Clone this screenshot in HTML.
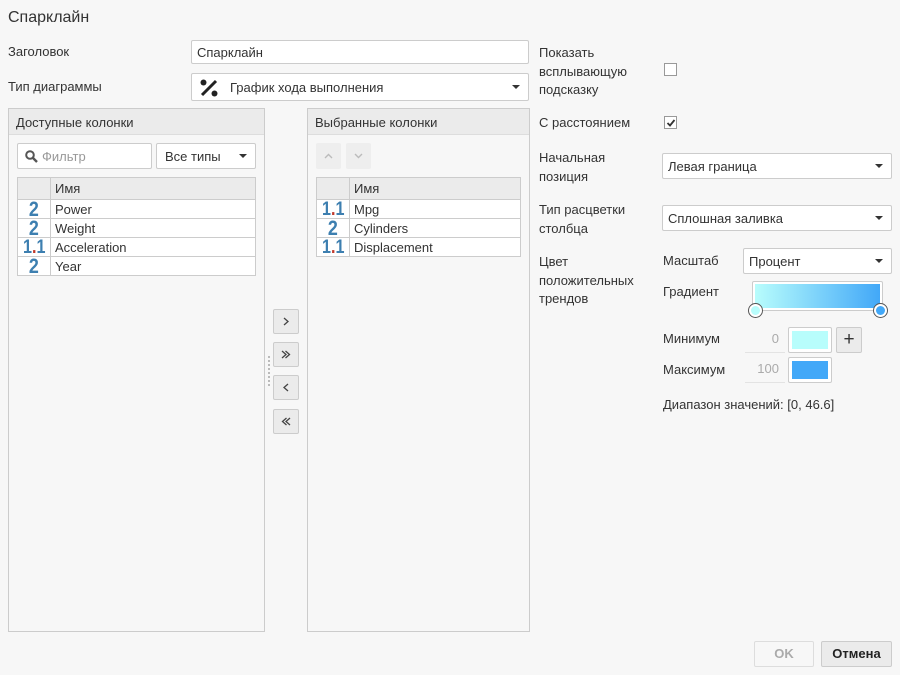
<!DOCTYPE html>
<html><head><meta charset="utf-8"><style>
*{box-sizing:border-box;margin:0;padding:0}
body{width:900px;height:675px;background:#f7f7f7;font-family:"Liberation Sans","DejaVu Sans",sans-serif;font-size:13px;color:#333;position:relative;overflow:hidden}
.a{position:absolute}
.box{position:absolute;background:#fff;border:1px solid #ccc;border-radius:2px}
.sel::after{content:"";position:absolute;right:8px;top:50%;margin-top:-2px;border-left:4px solid transparent;border-right:4px solid transparent;border-top:4px solid #333}
.t{position:absolute;white-space:nowrap}
.panel{position:absolute;border:1px solid #ccc;background:#f7f7f7}
.ph{height:26px;background:#ebebeb;border-bottom:1px solid #ddd;padding:6px 7px;font-size:13px}
table{border-collapse:collapse;position:absolute;background:#fff}
td{border:1px solid #ccc;height:19px;padding:0 4px;font-size:13px}
tr.h td{background:#ebebeb;height:22px}
td.i{width:33px;text-align:center;color:#3d7fb0;font-weight:bold;font-size:21px;line-height:17px;padding:0}
td.i span.n{display:inline-block;transform:scaleX(0.85)}
.btn{position:absolute;background:#ebebeb;border:1px solid #ccc;border-radius:2px;text-align:center;font-size:13px;color:#555}
.cb{position:absolute;width:13px;height:13px;border:1px solid #999;background:#fff}
.r{color:#c0392b}
</style></head><body>
<div class="t" style="left:8px;top:9px;font-size:16px">Спарклайн</div>
<div class="t" style="left:8px;top:44px">Заголовок</div>
<div class="box" style="left:191px;top:40px;width:338px;height:24px"><span class="t" style="left:5px;top:4px">Спарклайн</span></div>
<div class="t" style="left:8px;top:79px">Тип диаграммы</div>
<div class="box sel" style="left:191px;top:73px;width:338px;height:28px">
<svg class="a" style="left:7px;top:4px" width="20" height="20" viewBox="0 0 20 20"><line x1="3" y1="17" x2="17" y2="3" stroke="#222" stroke-width="3"/><circle cx="4.5" cy="4.5" r="3" fill="#222"/><circle cx="15.5" cy="15.5" r="3" fill="#222"/></svg>
<span class="t" style="left:38px;top:6px">График хода выполнения</span></div>

<div class="panel" style="left:8px;top:108px;width:257px;height:524px"><div class="ph">Доступные колонки</div></div>
<div class="box" style="left:17px;top:143px;width:135px;height:26px">
<svg class="a" style="left:7px;top:6px" width="13" height="13" viewBox="0 0 13 13"><circle cx="5" cy="5" r="3.8" fill="none" stroke="#555" stroke-width="2"/><line x1="8" y1="8" x2="12" y2="12" stroke="#555" stroke-width="2.4"/></svg>
<span class="t" style="left:24px;top:5px;color:#999">Фильтр</span></div>
<div class="box sel" style="left:156px;top:143px;width:100px;height:26px"><span class="t" style="left:8px;top:5px">Все типы</span></div>
<table style="left:17px;top:177px;width:239px">
<tr class="h"><td class="i"></td><td>Имя</td></tr>
<tr><td class="i"><span class="n">2</span></td><td>Power</td></tr>
<tr><td class="i"><span class="n">2</span></td><td>Weight</td></tr>
<tr><td class="i" style="font-size:19px"><span class="n">1<span class="r">.</span>1</span></td><td>Acceleration</td></tr>
<tr><td class="i"><span class="n">2</span></td><td>Year</td></tr>
</table>

<div class="btn" style="left:273px;top:309px;width:26px;height:25px"><svg width="24" height="23" viewBox="0 0 24 23"><path d="M10 8 L14 11.5 L10 15" fill="none" stroke="#444" stroke-width="1.3"/></svg></div>
<div class="btn" style="left:273px;top:342px;width:26px;height:25px"><svg width="24" height="23" viewBox="0 0 24 23"><path d="M8 8 L12 11.5 L8 15 M11.5 8 L15.5 11.5 L11.5 15" fill="none" stroke="#444" stroke-width="1.3"/></svg></div>
<div class="btn" style="left:273px;top:375px;width:26px;height:25px"><svg width="24" height="23" viewBox="0 0 24 23"><path d="M14 8 L10 11.5 L14 15" fill="none" stroke="#444" stroke-width="1.3"/></svg></div>
<div class="btn" style="left:273px;top:409px;width:26px;height:25px"><svg width="24" height="23" viewBox="0 0 24 23"><path d="M12.5 8 L8.5 11.5 L12.5 15 M16 8 L12 11.5 L16 15" fill="none" stroke="#444" stroke-width="1.3"/></svg></div>
<div class="a" style="left:268px;top:356px;width:2px;height:30px;border-left:2px dotted #bbb"></div>

<div class="panel" style="left:307px;top:108px;width:223px;height:524px"><div class="ph">Выбранные колонки</div></div>
<div class="btn" style="left:316px;top:143px;width:25px;height:26px;border:none;background:#eee"><svg width="25" height="26" viewBox="0 0 25 26"><path d="M9 15 L12.5 11.5 L16 15" fill="none" stroke="#bbb" stroke-width="1.4"/></svg></div>
<div class="btn" style="left:346px;top:143px;width:25px;height:26px;border:none;background:#eee"><svg width="25" height="26" viewBox="0 0 25 26"><path d="M9 11 L12.5 14.5 L16 11" fill="none" stroke="#bbb" stroke-width="1.4"/></svg></div>
<table style="left:316px;top:177px;width:205px">
<tr class="h"><td class="i"></td><td>Имя</td></tr>
<tr><td class="i" style="font-size:19px"><span class="n">1<span class="r">.</span>1</span></td><td>Mpg</td></tr>
<tr><td class="i"><span class="n">2</span></td><td>Cylinders</td></tr>
<tr><td class="i" style="font-size:19px"><span class="n">1<span class="r">.</span>1</span></td><td>Displacement</td></tr>
</table>

<div class="t" style="left:539px;top:44px;line-height:18.5px">Показать<br>всплывающую<br>подсказку</div>
<div class="cb" style="left:664px;top:63px"></div>
<div class="t" style="left:539px;top:115px">С расстоянием</div>
<div class="cb" style="left:664px;top:116px"><svg class="a" style="left:1px;top:1px" width="10" height="10" viewBox="0 0 10 10"><path d="M1.5 5 L4 7.5 L8.5 2" fill="none" stroke="#333" stroke-width="1.8"/></svg></div>
<div class="t" style="left:539px;top:149px;line-height:18.5px">Начальная<br>позиция</div>
<div class="box sel" style="left:662px;top:153px;width:230px;height:26px"><span class="t" style="left:5px;top:5px">Левая граница</span></div>
<div class="t" style="left:539px;top:201px;line-height:18.5px">Тип расцветки<br>столбца</div>
<div class="box sel" style="left:662px;top:205px;width:230px;height:26px"><span class="t" style="left:5px;top:5px">Сплошная заливка</span></div>
<div class="t" style="left:539px;top:253px;line-height:18.5px">Цвет<br>положительных<br>трендов</div>
<div class="t" style="left:663px;top:253px">Масштаб</div>
<div class="box sel" style="left:743px;top:248px;width:149px;height:26px"><span class="t" style="left:5px;top:5px">Процент</span></div>
<div class="t" style="left:663px;top:284px">Градиент</div>
<div class="box" style="left:752px;top:281px;width:131px;height:30px;padding:2px"><div style="width:100%;height:100%;background:linear-gradient(to right,#b8fdfc,#42a8f8)"></div></div>
<div class="a" style="left:748px;top:303px;width:15px;height:15px;border-radius:50%;background:#fff;border:1px solid #555"><div style="margin:2px;width:9px;height:9px;border-radius:50%;background:#b8fdfc"></div></div>
<div class="a" style="left:873px;top:303px;width:15px;height:15px;border-radius:50%;background:#fff;border:1px solid #555"><div style="margin:2px;width:9px;height:9px;border-radius:50%;background:#42a8f8"></div></div>
<div class="t" style="left:663px;top:331px">Минимум</div>
<div class="a" style="left:745px;top:327px;width:40px;height:26px;border-bottom:1px solid #e3e3e3;text-align:right;padding:4px 6px;color:#aaa">0</div>
<div class="box" style="left:788px;top:327px;width:44px;height:26px;padding:3px"><div style="height:100%;background:#b8fdfc"></div></div>
<div class="btn" style="left:836px;top:327px;width:26px;height:26px;font-size:19px;line-height:23px;color:#333">+</div>
<div class="t" style="left:663px;top:362px">Максимум</div>
<div class="a" style="left:745px;top:357px;width:40px;height:26px;border-bottom:1px solid #e3e3e3;text-align:right;padding:4px 6px;color:#aaa">100</div>
<div class="box" style="left:788px;top:357px;width:44px;height:26px;padding:3px"><div style="height:100%;background:#42a8f8"></div></div>
<div class="t" style="left:663px;top:397px">Диапазон значений: [0, 46.6]</div>

<div class="btn" style="left:754px;top:641px;width:60px;height:26px;line-height:24px;background:#f7f7f7;border-color:#ddd;color:#aaa;font-weight:bold">OK</div>
<div class="btn" style="left:821px;top:641px;width:71px;height:26px;line-height:24px;color:#222;font-weight:bold">Отмена</div>
</body></html>
